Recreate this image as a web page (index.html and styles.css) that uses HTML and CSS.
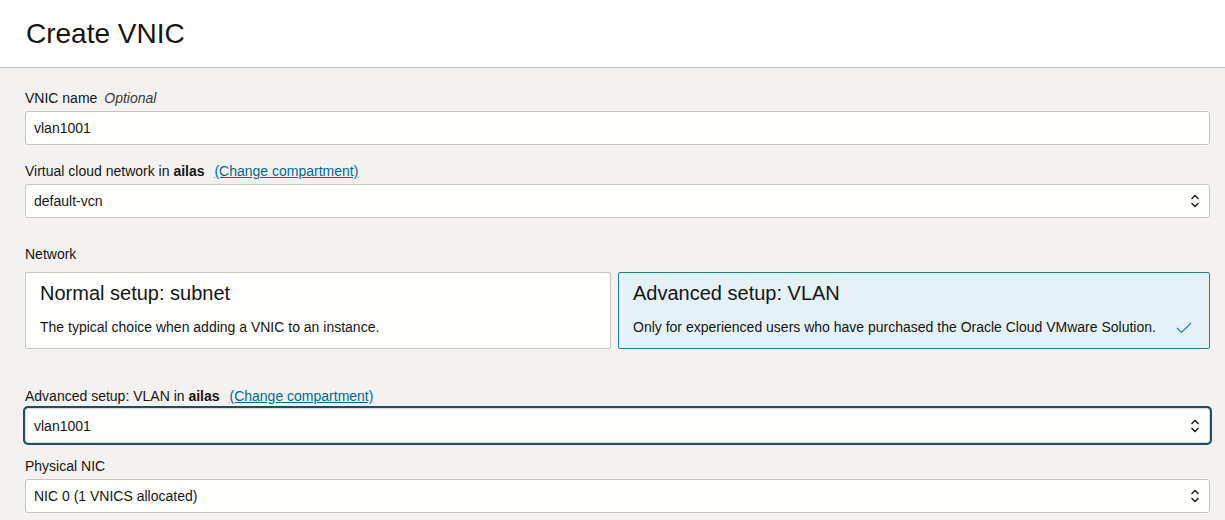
FILE: index.html
```html
<!DOCTYPE html>
<html>
<head>
<meta charset="utf-8">
<link rel="stylesheet" href="styles.css">
</head>
<body>
<header class="header"><h1 class="title">Create VNIC</h1></header>
<main class="content">
  <div class="field f-name">
    <label class="label">VNIC name <span class="optional">Optional</span></label>
    <div class="input"><span>vlan1001</span></div>
  </div>
  <div class="field f-vcn">
    <label class="label">Virtual cloud network in <b>ailas</b> <a class="link" href="#">(Change compartment)</a></label>
    <div class="input select"><span>default-vcn</span>
      <svg class="arrows" width="10" height="16" viewBox="0 0 10 16"><path d="M1.5 6 L5 2.5 L8.5 6 M1.5 10 L5 13.5 L8.5 10" fill="none" stroke="#161513" stroke-width="1.4"/></svg>
    </div>
  </div>
  <div class="field f-net">
    <label class="label">Network</label>
    <div class="cards">
      <div class="card">
        <div class="card-title">Normal setup: subnet</div>
        <div class="card-desc">The typical choice when adding a VNIC to an instance.</div>
      </div>
      <div class="card selected">
        <div class="card-title">Advanced setup: VLAN</div>
        <div class="card-desc">Only for experienced users who have purchased the Oracle Cloud VMware Solution.</div>
        <svg class="check" width="16" height="12" viewBox="0 0 16 12"><path d="M1 6 L5.5 10.5 L15 1" fill="none" stroke="#227e9e" stroke-width="1.2"/></svg>
      </div>
    </div>
  </div>
  <div class="field f-vlan">
    <label class="label">Advanced setup: VLAN in <b>ailas</b> <a class="link" href="#">(Change compartment)</a></label>
    <div class="input select focused"><span>vlan1001</span>
      <svg class="arrows" width="10" height="16" viewBox="0 0 10 16"><path d="M1.5 6 L5 2.5 L8.5 6 M1.5 10 L5 13.5 L8.5 10" fill="none" stroke="#161513" stroke-width="1.4"/></svg>
    </div>
  </div>
  <div class="field f-nic">
    <label class="label">Physical NIC</label>
    <div class="input select"><span>NIC 0 (1 VNICS allocated)</span>
      <svg class="arrows" width="10" height="16" viewBox="0 0 10 16"><path d="M1.5 6 L5 2.5 L8.5 6 M1.5 10 L5 13.5 L8.5 10" fill="none" stroke="#161513" stroke-width="1.4"/></svg>
    </div>
  </div>
</main>
</body>
</html>
```

FILE: styles.css
```css
* { box-sizing: border-box; }
html, body { margin: 0; padding: 0; }
body {
  background: #f3f2f1;
  font-family: "Liberation Sans", Arial, sans-serif;
  color: #161513;
  width: 1225px;
  height: 520px;
  overflow: hidden;
}
.header {
  background: #fff;
  height: 68px;
  border-bottom: 1px solid #c4c0bc;
  padding: 16px 26px 0;
}
.title {
  margin: 0;
  font-weight: normal;
  font-size: 28px;
  line-height: 36px;
  color: #161513;
}
.content {
  padding: 22px 15px 0 25px;
  display: flex;
  flex-direction: column;
}
.label {
  display: block;
  font-size: 14px;
  line-height: 17px;
  color: #161513;
}
.label b { font-weight: bold; }
.optional {
  font-style: italic;
  color: #3d3b38;
  font-size: 14px;
  margin-left: 3px;
}
.link {
  color: #006b8f;
  text-decoration: underline;
  margin-left: 6px;
}
.input {
  margin-top: 4px;
  height: 34px;
  background: #fffffe;
  border: 1px solid #c9c6c2;
  border-radius: 3px;
  display: flex;
  align-items: center;
  justify-content: space-between;
  padding: 0 9px 0 8px;
  font-size: 14px;
  color: #161513;
}
.f-vcn { margin-top: 18px; }
.f-vcn .input { margin-top: 4px; }
.f-net { margin-top: 28px; }
.f-vlan { margin-top: 39px; }
.f-vlan .input { margin-top: 3px; height: 35px; }
.f-nic { margin-top: 15px; }
.f-nic .input { margin-top: 4px; }
.focused {
  border-color: #d8dde0;
  box-shadow: 0 0 0 2px #1f4f5f;
}
.arrows { display: block; }
.cards {
  margin-top: 9px;
  display: grid;
  grid-template-columns: 586px 1fr;
  gap: 7px;
}
.card {
  height: 77px;
  background: #fffffe;
  border: 1px solid #c9c6c2;
  border-radius: 2px;
  padding: 9px 14px 0;
  position: relative;
}
.card.selected {
  background: #e4f1f6;
  border-color: #227e9e;
}
.card-title {
  font-size: 20px;
  line-height: 22px;
  color: #161513;
}
.card-desc {
  margin-top: 15px;
  font-size: 14px;
  line-height: 17px;
  color: #161513;
}
.check {
  position: absolute;
  right: 17px;
  top: 49px;
}
```
